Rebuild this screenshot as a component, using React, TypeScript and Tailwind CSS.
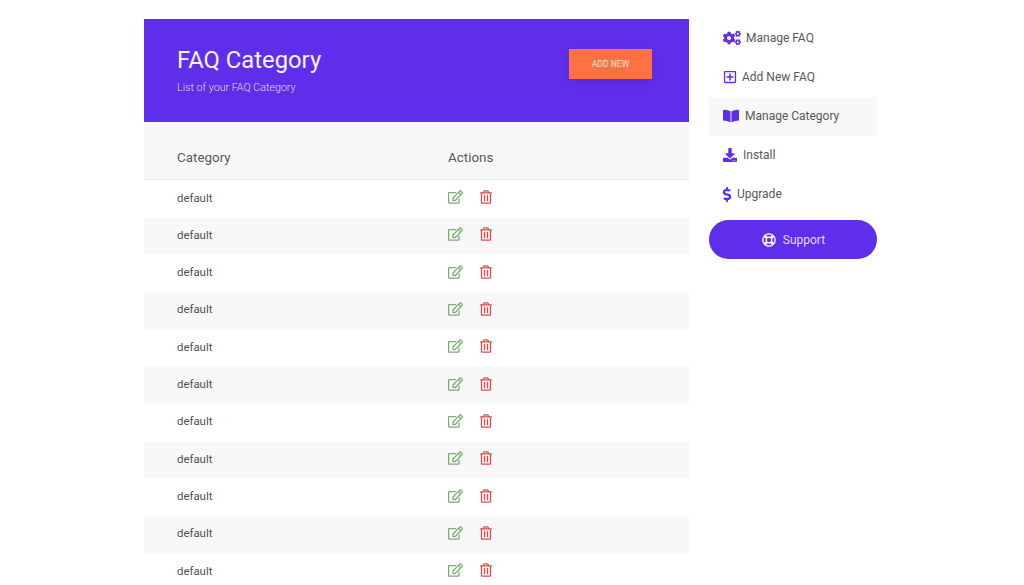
import { FaCogs, FaRegPlusSquare, FaBookOpen, FaDownload, FaDollarSign, FaRegLifeRing, FaRegEdit, FaRegTrashAlt } from "react-icons/fa";

const rows = Array.from({ length: 11 }, (_, i) => i);

const menu = [
  { label: "Manage FAQ", icon: <FaCogs className="w-[18px] h-[18px]" />, gap: "gap-[5px]", pad: "pl-[14px]" },
  { label: "Add New FAQ", icon: <FaRegPlusSquare className="w-[14px] h-[14px]" />, gap: "gap-[5px]", pad: "pl-[14px]" },
  { label: "Manage Category", icon: <FaBookOpen className="w-[16px] h-[16px]" />, gap: "gap-[6px]", pad: "pl-[14px]", active: true },
  { label: "Install", icon: <FaDownload className="w-[14px] h-[14px]" />, gap: "gap-[6px]", pad: "pl-[14px]" },
  { label: "Upgrade", icon: <FaDollarSign className="w-[14px] h-[15px]" />, gap: "gap-[3px]", pad: "pl-[11px]" },
];

export default function App() {
  return (
    <div className="h-[585px] overflow-hidden bg-white font-['Roboto',sans-serif] flex pl-[144px] pt-[19px] gap-[20px]">
      <div className="w-[545px] shrink-0">
        {/* Header */}
        <div className="h-[103px] bg-[#5f2eea] flex justify-between pl-[33px] pr-[37px]">
          <div className="pt-[25px]">
            <h1 className="text-[23.8px] leading-[32px] text-[#f6f3fe]">FAQ Category</h1>
            <p className="mt-[4px] text-[10.7px] leading-[16px] font-light text-[#e0d7fb]">List of your FAQ Category</p>
          </div>
          <button className="mt-[30px] w-[83px] h-[30px] bg-[#ff7043] text-[#fbe3da] text-[8.6px] shadow-[0_4px_10px_rgba(0,0,0,0.08)]">
            ADD NEW
          </button>
        </div>

        {/* Table */}
        <div className="h-[58px] bg-[#f8f8f8] border-b border-[#ececec] flex items-center pl-[33px] pt-[15px] text-[13.4px] text-[#55585c]">
          <div className="w-[271px]">Category</div>
          <div>Actions</div>
        </div>
        {rows.map((i) => (
          <div key={i} className={`h-[37.3px] flex items-center pl-[33px] text-[11.4px] text-[#4d5054] ${i % 2 ? "bg-[#f8f8f8]" : "bg-white"}`}>
            <div className="w-[271px] pb-px">default</div>
            <div className="flex items-center gap-[17px] -mt-[3px]">
              <FaRegEdit className="w-[15px] h-[14px] text-[#7bab73]" />
              <FaRegTrashAlt className="w-[12px] h-[14px] text-[#dc4c4c]" />
            </div>
          </div>
        ))}
      </div>

      {/* Sidebar */}
      <div className="w-[168px] shrink-0">
        {menu.map((m) => (
          <div key={m.label} className={`h-[39px] flex items-center pb-px ${m.gap} ${m.pad} text-[12px] text-[#55585c] ${m.active ? "bg-[#f8f8f8]" : ""}`}>
            <span className="text-[#5f2eea]">{m.icon}</span>
            <span>{m.label}</span>
          </div>
        ))}
        <button className="mt-[6px] w-full h-[39px] rounded-full bg-[#5f2eea] text-[#e3dcfb] text-[12px] flex items-center justify-center gap-[7px] pl-px">
          <FaRegLifeRing className="w-[14px] h-[14px] text-white" />
          Support
        </button>
      </div>
    </div>
  );
}
